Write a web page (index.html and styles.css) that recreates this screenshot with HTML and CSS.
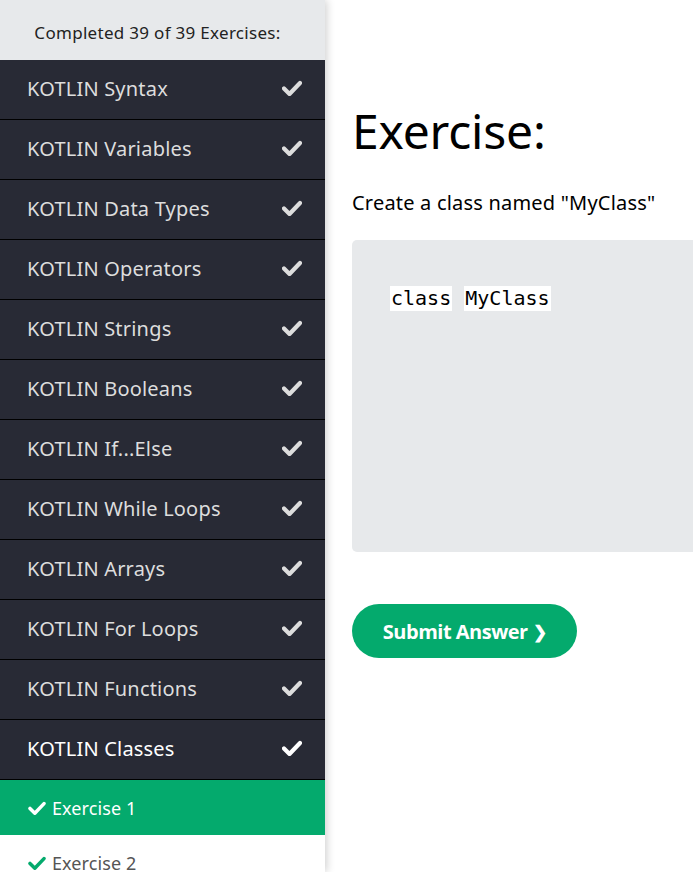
FILE: index.html
```html
<!DOCTYPE html>
<html>
<head>
<meta charset="utf-8">
<link rel="stylesheet" href="styles.css">
</head>
<body>
<div class="page">
  <aside class="sidebar">
    <div class="progress">Completed 39 of 39 Exercises:</div>
    <div class="item"><span>KOTLIN Syntax</span><svg class="chk" viewBox="0 0 20 16"><path d="M2 8.5 L7.5 14 L18 3" /></svg></div>
    <div class="item"><span>KOTLIN Variables</span><svg class="chk" viewBox="0 0 20 16"><path d="M2 8.5 L7.5 14 L18 3" /></svg></div>
    <div class="item"><span>KOTLIN Data Types</span><svg class="chk" viewBox="0 0 20 16"><path d="M2 8.5 L7.5 14 L18 3" /></svg></div>
    <div class="item"><span>KOTLIN Operators</span><svg class="chk" viewBox="0 0 20 16"><path d="M2 8.5 L7.5 14 L18 3" /></svg></div>
    <div class="item"><span>KOTLIN Strings</span><svg class="chk" viewBox="0 0 20 16"><path d="M2 8.5 L7.5 14 L18 3" /></svg></div>
    <div class="item"><span>KOTLIN Booleans</span><svg class="chk" viewBox="0 0 20 16"><path d="M2 8.5 L7.5 14 L18 3" /></svg></div>
    <div class="item"><span>KOTLIN If...Else</span><svg class="chk" viewBox="0 0 20 16"><path d="M2 8.5 L7.5 14 L18 3" /></svg></div>
    <div class="item"><span>KOTLIN While Loops</span><svg class="chk" viewBox="0 0 20 16"><path d="M2 8.5 L7.5 14 L18 3" /></svg></div>
    <div class="item"><span>KOTLIN Arrays</span><svg class="chk" viewBox="0 0 20 16"><path d="M2 8.5 L7.5 14 L18 3" /></svg></div>
    <div class="item"><span>KOTLIN For Loops</span><svg class="chk" viewBox="0 0 20 16"><path d="M2 8.5 L7.5 14 L18 3" /></svg></div>
    <div class="item"><span>KOTLIN Functions</span><svg class="chk" viewBox="0 0 20 16"><path d="M2 8.5 L7.5 14 L18 3" /></svg></div>
    <div class="item active"><span>KOTLIN Classes</span><svg class="chk" viewBox="0 0 20 16"><path d="M2 8.5 L7.5 14 L18 3" /></svg></div>
    <div class="sub current"><svg class="subchk" viewBox="0 0 20 16"><path d="M2 8.5 L7.5 14 L18 3" /></svg><span>Exercise 1</span></div>
    <div class="sub"><svg class="subchk" viewBox="0 0 20 16"><path d="M2 8.5 L7.5 14 L18 3" /></svg><span>Exercise 2</span></div>
  </aside>
  <main class="main">
    <h1 class="title">Exercise:</h1>
    <p class="task">Create a class named "MyClass"</p>
    <div class="codebox">
      <code class="code"><span class="field">class</span> <span class="field">MyClass</span></code>
    </div>
    <button class="submit">Submit Answer <span class="arrow">&#10095;</span></button>
  </main>
</div>
</body>
</html>
```

FILE: styles.css
```css
html, body {
  margin: 0;
  padding: 0;
  background: #ffffff;
  overflow: hidden;
}
body {
  font-family: "Noto Sans", "Open Sans", sans-serif;
}
.page {
  display: flex;
  height: 872px;
}
.sidebar {
  width: 325px;
  flex: 0 0 325px;
  background: #282a35;
  box-shadow: 2px 0 8px rgba(0, 0, 0, 0.18);
  position: relative;
  z-index: 1;
  overflow: hidden;
}
.progress {
  height: 60px;
  background: #e7e9eb;
  color: #222;
  font-size: 17px;
  display: flex;
  align-items: center;
  justify-content: center;
  letter-spacing: 0.3px;
  padding: 4px 10px 0 0;
  box-sizing: border-box;
}
.item {
  height: 59px;
  border-bottom: 1px solid #000;
  display: flex;
  align-items: center;
  justify-content: space-between;
  padding: 0 23px 0 27px;
  color: #dddddd;
  font-size: 20px;
  letter-spacing: 0.2px;
}
.item span {
  position: relative;
  top: -1px;
}
.item.active {
  color: #ffffff;
}
.chk {
  width: 20px;
  height: 16px;
  fill: none;
  stroke: #dddddd;
  stroke-width: 4.2;
  stroke-linecap: round;
  stroke-linejoin: round;
  margin-top: -4px;
}
.item.active .chk {
  stroke: #ffffff;
}
.sub {
  height: 55px;
  display: flex;
  align-items: center;
  padding-left: 28px;
  font-size: 18px;
  color: #555;
  background: #fff;
  letter-spacing: 0.1px;
}
.sub.current {
  background: #04aa6d;
  color: #ffffff;
}
.subchk {
  width: 18px;
  height: 14px;
  margin-right: 6px;
  fill: none;
  stroke: #04aa6d;
  stroke-width: 4;
  stroke-linecap: round;
  stroke-linejoin: round;
}
.sub.current .subchk {
  stroke: #ffffff;
}
.main {
  flex: 1;
  padding-left: 27px;
  min-width: 0;
}
.title {
  margin: 96px 0 0 0;
  font-size: 48px;
  font-weight: 400;
  line-height: 70px;
  color: #000;
  letter-spacing: -0.2px;
}
.task {
  margin: 23px 0 0 0;
  font-size: 20px;
  line-height: 28px;
  color: #000;
  letter-spacing: 0.2px;
}
.codebox {
  margin-top: 23px;
  height: 312px;
  width: 360px;
  background: #e7e9eb;
  border-radius: 5px 0 0 5px;
  box-sizing: border-box;
  padding: 46px 0 0 38px;
}
.code {
  font-family: "DejaVu Sans Mono", "Liberation Mono", monospace;
  font-size: 20px;
  line-height: 25px;
  color: #000;
}
.field {
  background: #fff;
  display: inline-block;
  height: 25px;
  padding: 0 1px;
}
.submit {
  margin-top: 52px;
  width: 225px;
  height: 54px;
  border: none;
  border-radius: 27px;
  background: #04aa6d;
  color: #fff;
  font-family: "Open Sans", "Noto Sans", sans-serif;
  font-weight: 700;
  font-size: 20px;
  letter-spacing: -0.5px;
  display: flex;
  align-items: center;
  justify-content: center;
  padding: 0;
}
.arrow {
  margin-left: 5px;
  font-size: 17px;
}
```
